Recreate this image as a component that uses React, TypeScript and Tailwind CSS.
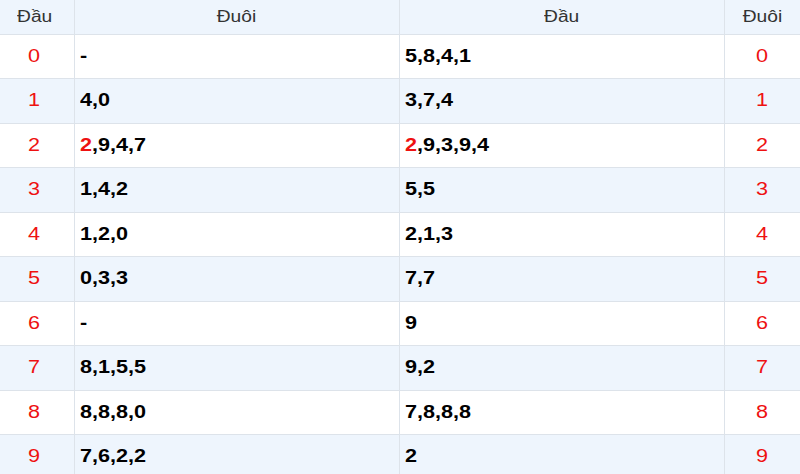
import React from 'react';

// --- Data: loto đầu / đuôi ---
type Row = { idx: number; duoi: string; dau: string };

const rows: Row[] = [
  { idx: 0, duoi: '-', dau: '5,8,4,1' },
  { idx: 1, duoi: '4,0', dau: '3,7,4' },
  { idx: 2, duoi: '2,9,4,7', dau: '2,9,3,9,4' },
  { idx: 3, duoi: '1,4,2', dau: '5,5' },
  { idx: 4, duoi: '1,2,0', dau: '2,1,3' },
  { idx: 5, duoi: '0,3,3', dau: '7,7' },
  { idx: 6, duoi: '-', dau: '9' },
  { idx: 7, duoi: '8,1,5,5', dau: '9,2' },
  { idx: 8, duoi: '8,8,8,0', dau: '7,8,8,8' },
  { idx: 9, duoi: '7,6,2,2', dau: '2' },
];

function Nums({ value, hot }: { value: string; hot: boolean }) {
  if (!hot) return <>{value}</>;
  const [first, ...rest] = value.split(',');
  return (
    <>
      <span className="text-[#ee1111]">{first}</span>,{rest.join(',')}
    </>
  );
}

const wide = 'inline-block scale-x-[1.2]';

export default function App() {
  return (
    <div className="w-[800px] h-[474px] overflow-hidden bg-white font-['Liberation_Sans',Arial,sans-serif]">
      <table className="w-[800px] table-fixed border-collapse">
        <colgroup>
          <col className="w-[74px]" />
          <col className="w-[325px]" />
          <col className="w-[325px]" />
          <col className="w-[76px]" />
        </colgroup>
        <thead>
          <tr className="h-[34px] bg-[#eef5fd] text-[16px] text-[#333333]">
            <th className="border-b border-[#dde3ea] pr-[5px] font-normal text-center">
              <span className={wide}>Đầu</span>
            </th>
            <th className="border-b border-l border-[#dde3ea] font-normal text-center">
              <span className={wide}>Đuôi</span>
            </th>
            <th className="border-b border-l border-[#dde3ea] font-normal text-center">
              <span className={wide}>Đầu</span>
            </th>
            <th className="border-b border-l border-[#dde3ea] font-normal text-center">
              <span className={wide}>Đuôi</span>
            </th>
          </tr>
        </thead>
        <tbody>
          {rows.map((r) => (
            <tr key={r.idx} className={r.idx % 2 === 1 ? 'h-[44.5px] bg-[#eef5fd]' : 'h-[44.5px] bg-white'}>
              <td className="border-b border-[#dde3ea] pr-[5px] text-center text-[18px] text-[#ee1111]">
                <span className={wide}>{r.idx}</span>
              </td>
              <td className="border-b border-l border-[#dde3ea] pl-[5px] text-[18px] font-bold text-black">
                <span className={`${wide} origin-left`}>
                  <Nums value={r.duoi} hot={r.idx === 2} />
                </span>
              </td>
              <td className="border-b border-l border-[#dde3ea] pl-[5px] text-[18px] font-bold text-black">
                <span className={`${wide} origin-left`}>
                  <Nums value={r.dau} hot={r.idx === 2} />
                </span>
              </td>
              <td className="border-b border-l border-[#dde3ea] text-center text-[18px] text-[#ee1111]">
                <span className={wide}>{r.idx}</span>
              </td>
            </tr>
          ))}
        </tbody>
      </table>
    </div>
  );
}
